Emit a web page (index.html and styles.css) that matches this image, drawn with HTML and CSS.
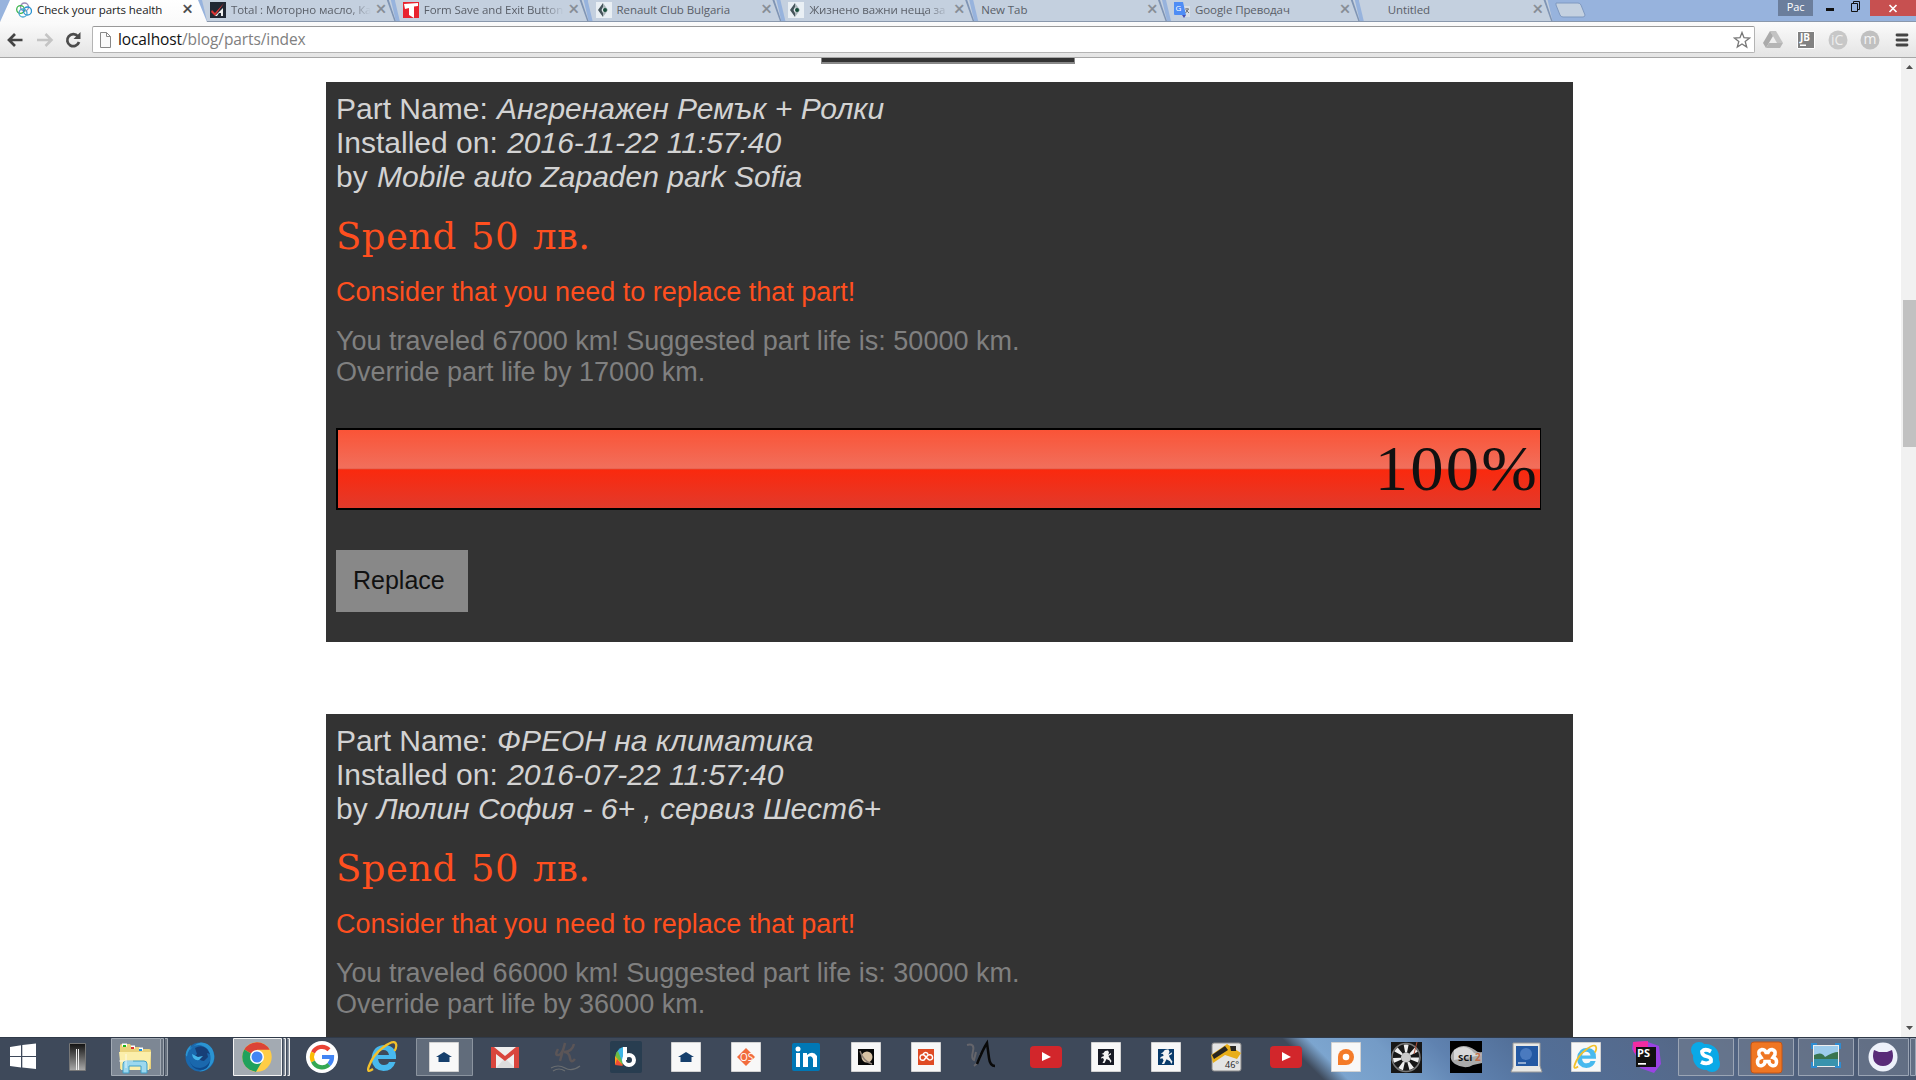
FILE: index.html
```html
<!DOCTYPE html>
<html lang="bg">
<head>
<meta charset="utf-8">
<title>Check your parts health</title>
<link rel="stylesheet" href="styles.css">
</head>
<body>
<header class="tabstrip">
  <div class="tab active"><svg class="fav" viewBox="0 0 16 16" fill="none" stroke-width="1.3"><circle cx="8.500" cy="5" r="4" stroke="#9a8ab8"/><circle cx="4.500" cy="7.500" r="3.800" stroke="#39b54a"/><circle cx="11.500" cy="9" r="4" stroke="#2993d1"/><circle cx="7" cy="11" r="4" stroke="#4aa6d0"/></svg><span class="label">Check your parts health</span><i class="x">×</i></div>
  <div class="tab"><svg class="fav" viewBox="0 0 16 16"><path fill="#202733" d="M0 0h16v16H0z"/><path d="M2 8l3 3 9-10-9 13-4-4z" fill="#d33"/><path d="M5 14l8-8v8h-2v-3H9l-2 3z" fill="#eee"/></svg><span class="label fade">Total : Моторно масло, Ка</span><i class="x">×</i></div>
  <div class="tab"><svg class="fav" viewBox="0 0 16 16"><path fill="#e8232f" d="M0 0h16v16H0z"/><path d="M1 2l14-1v3l-4 .5V16l-5-3V6L2 7z" fill="#fff"/></svg><span class="label fade">Form Save and Exit Button</span><i class="x">×</i></div>
  <div class="tab"><svg class="fav" viewBox="0 0 16 16"><path fill="#e9eff4" d="M0 0h16v16H0z"/><path d="M7 1L2 8l5 7V11L5.500 8 7 5z" fill="#46555b"/><path d="M7 1l5 7-5 7v-4l2-3-2-3z" fill="#a9b4b8"/><circle cx="9" cy="8" r="2" fill="#174d3a"/></svg><span class="label">Renault Club Bulgaria</span><i class="x">×</i></div>
  <div class="tab"><svg class="fav" viewBox="0 0 16 16"><path fill="#e9eff4" d="M0 0h16v16H0z"/><path d="M7 1L2 8l5 7V11L5.500 8 7 5z" fill="#46555b"/><path d="M7 1l5 7-5 7v-4l2-3-2-3z" fill="#a9b4b8"/><circle cx="9" cy="8" r="2" fill="#174d3a"/></svg><span class="label fade">Жизнено важни неща за</span><i class="x">×</i></div>
  <div class="tab nofav"><span class="label">New Tab</span><i class="x">×</i></div>
  <div class="tab"><svg class="fav" viewBox="0 0 16 16"><path d="M7 4h9v11H9z" fill="#d9dee5"/><path d="M0 0h9l3 13H1a1 1 0 01-1-1z" fill="#4f8df5"/><path d="M8 13h4l-2 3z" fill="#4650b5"/><text x="1.500" y="9" font-size="8" fill="#fff">G</text><path d="M11 7h4M13 6v1M14.500 7l-3 4M12 8l3 3" stroke="#777" fill="none"/></svg><span class="label">Google Преводач</span><i class="x">×</i></div>
  <div class="tab blank"><span class="label">Untitled</span><i class="x">×</i></div>
  <svg class="newtab" width="34" height="22" viewBox="0 0 34 22"><path d="M4 3h22q2 0 3 2l4 10q0 2-2 2H11q-2 0-3-2L4 5z" fill="#c4d1e0" stroke="#7f99c0"/></svg>
  <div class="winctl"><span class="lang">Рас</span><svg width="57" height="17" viewBox="0 0 57 17"><path d="M13 8h8v3h-8z" fill="#111"/><path d="M38.500 3.500h6v8h-6zM40.500 3V1.500h6v8H45" fill="none" stroke="#111"/></svg><span class="close"><svg width="10" height="9" viewBox="0 0 10 9"><path d="M1.500 1l7 7M8.500 1l-7 7" stroke="#fff" stroke-width="1.700"/></svg></span></div>
</header>
<nav class="toolbar">
  <svg width="92" height="36" viewBox="0 0 92 36" fill="none"><path d="M22.500 18H10M15 12l-6 6 6 6" stroke="#444" stroke-width="2.700"/><path d="M37 18h13M45.500 12l6 6-6 6" stroke="#c4c4c4" stroke-width="2.500"/><path d="M78 14.500A6 6 0 1 0 79 20" stroke="#4c4c4c" stroke-width="2.700"/><path d="M80.500 10v7h-7z" fill="#4c4c4c"/></svg>
  <div class="omnibox">
    <svg width="14" height="18" viewBox="0 0 14 18"><path d="M1.500 1.500h6l4 4v11h-10zM7.500 1.500v4h4" fill="#fafafa" stroke="#888"/></svg>
    <span class="url">localhost<span>/blog/parts/index</span></span>
    <svg class="star" width="18" height="18" viewBox="0 0 18 18"><path d="M9 1.500l2 5.200 5.600.3-4.400 3.500 1.500 5.500L9 13l-4.700 3 1.500-5.500L1.400 7 7 6.700z" fill="#fff" stroke="#777" stroke-width="1.300"/></svg>
  </div>
  <svg width="161" height="36" viewBox="0 0 161 36"><path d="M15 9h6l7 12h-6z" fill="#c3c3c3"/><path d="M15 9l3 5-7 12-3-5z" fill="#aaa"/><path d="M14 21h14l-3 5H11z" fill="#b5b5b5"/><path d="M42.500 9.500h17v17h-17z" fill="#818181" stroke="#fff"/><text x="45" y="19" font-size="10" font-weight="700" fill="#fff">JB</text><path d="M45 22.500h6V24h-6z" fill="#fff"/><circle cx="83" cy="18" r="9.500" fill="#c7c7c7"/><text x="76" y="23" font-size="14" fill="#eee">iC</text><circle cx="115" cy="18" r="9.500" fill="#c0c0c0"/><text x="108.500" y="22" font-size="14" fill="#f4f4f4">m</text><path d="M142 13h10M142 18h10M142 23h10" stroke="#444" stroke-width="2.800" stroke-linecap="round"/></svg>
</nav>
<div class="viewport">
  <main class="content">
    <div class="strip"></div>
    <section class="card">
      <div class="head"><p>Part Name: <em>Ангренажен Ремък + Ролки</em></p><p>Installed on: <em>2016-11-22 11:57:40</em></p><p>by <em>Mobile auto Zapaden park Sofia</em></p></div>
      <p class="spend">Spend 50 лв.</p>
      <p class="warn">Consider that you need to replace that part!</p>
      <p class="info">You traveled 67000 km! Suggested part life is: 50000 km.<br>Override part life by 17000 km.</p>
      <div class="progress"><span>100%</span></div>
      <button class="replace">Replace</button>
    </section>
    <section class="card">
      <div class="head"><p>Part Name: <em>ФРЕОН на климатика</em></p><p>Installed on: <em>2016-07-22 11:57:40</em></p><p>by <em>Люлин София - 6+ , сервиз Шест6+</em></p></div>
      <p class="spend">Spend 50 лв.</p>
      <p class="warn">Consider that you need to replace that part!</p>
      <p class="info">You traveled 66000 km! Suggested part life is: 30000 km.<br>Override part life by 36000 km.</p>
    </section>
  </main>
  <div class="scroll"><svg width="15" height="16" viewBox="0 0 15 16"><path d="M5 11l3.500-4L12 11z" fill="#505050"/></svg><div class="thumb"></div><svg width="15" height="16" viewBox="0 0 15 16"><path d="M5 5l3.500 4L12 5z" fill="#505050"/></svg></div>
</div>
<footer class="taskbar">
  <svg viewBox="0 0 47 43"><path fill="#fff" d="M10 10l11-1.700V19H10zM22.300 8L36 6.500V19H22.300zM10 20h11v10.500L10 29zM22.300 20H36v12l-13.700-1.500z"/></svg>
  <svg viewBox="0 0 60 43"><defs><linearGradient id="dg" x2="0" y2="1"><stop stop-color="#111"/><stop offset="1" stop-color="#aaa"/></linearGradient></defs><path d="M22.500 6.500h16v27h-16z" fill="url(#dg)" stroke="#777"/><path d="M29.500 12v21M31.500 12v21" stroke="#eee"/></svg>
  <svg viewBox="0 0 63 43"><path d="M4.500 1.500h49v37h-49z" fill="#7d8794" stroke="#a2aab4"/><path d="M54 1.500h2.500v37H54M58 1.500h2.500v37H58" fill="#68727f" stroke="#a2aab4"/><path d="M13 9q0-2 2-2h8l2 3h7l2 2h8q2 0 2 2v18H13z" fill="#e9d27b"/><path d="M12 15h32l-2 18H14z" fill="#fbeeaa"/><path d="M15 8h5M24 10h4M32 12h4" stroke="#fff" stroke-width="3"/><path d="M16 9h3" stroke="#1bb51b" stroke-width="2"/><path d="M24 11h3" stroke="#d33" stroke-width="2"/><path d="M32 13h3" stroke="#1991e6" stroke-width="2"/><path d="M16 36v-9q0-3 3-3h18q3 0 3 3v9h-6v-7H22v7z" fill="#9cd8ef" stroke="#3f9fc8"/><path d="M19 17v14M12 24h14" stroke="#fff" stroke-opacity=".7"/></svg>
  <svg viewBox="0 0 61 43"><circle cx="30" cy="20" r="14.500" fill="#1a68ad"/><path d="M16 16q1-5 5-8l-1 5q4-6 11-7.500 7 0 11 6 4 8 1 14-5 9-14 9 9-3 11-9t-2-13q-6-6-13-4-7 3-8 11-2-1-1-3.500z" fill="#2b94d2"/><path d="M25 11q7-4 12 1l3 5-3-1 1 4-4 4q-4 0-5-3l-5-1 3-3z" fill="#173f78"/><path d="M19 22q2 9 11 9 7-1 10-7-1 9-10 9-9-1-11-11z" fill="#0e4a8c"/><path d="M22 17l6 3 5-1-4 4q-6 1-7-6z" fill="#43b5ea"/></svg>
  <svg viewBox="0 0 61 43"><path d="M2.500 1.500h48v37h-48z" fill="#a3aab2" stroke="#f3f3f3"/><path d="M52.500 1.500h2v37h-2M56.500 1.500h2v37h-2" fill="#8a939f" stroke="#eee"/><circle cx="26" cy="20" r="14.700" fill="#ffcd46"/><path d="M26 20L13.300 12.600A14.700 14.700 0 0 1 38.700 12.700H26z" fill="#db4437"/><path d="M13.300 12.600A14.700 14.700 0 0 0 25 34.700l6.500-11L26 20z" fill="#1fa15d"/><circle cx="26" cy="20" r="7" fill="#fff"/><circle cx="26" cy="20" r="5.500" fill="#4285f4"/></svg>
  <svg viewBox="0 0 61 43"><circle cx="30" cy="20" r="16" fill="#fff"/><g fill="none" stroke-width="4.200"><path d="M37 12.800A10 10 0 0 0 21 15.500" stroke="#ea4335"/><path d="M21 15.500a10 10 0 0 0 0 9" stroke="#fbbc05"/><path d="M21 24.500a10 10 0 0 0 16 3" stroke="#34a853"/><path d="M37 27.500q3-3 3-7.500H30" stroke="#4285f4"/></g></svg>
  <svg viewBox="0 0 61 43"><g id="ie"><path d="M43 22H25q1 6 6 6 4 0 5-3h6.500q-3 9-12 9-11-1-12-12 1-14 13.500-14 12 1 11 14zM25 18h11q-1-5-5.500-5T25 18z" fill="#48b9ee"/><path d="M20 32q-7 5-4-3Q20 18 30 10.500T42.500 6q2 3-1 8" fill="none" stroke="#f3c12b" stroke-width="2.300"/></g></svg>
  <svg viewBox="0 0 60 43"><path d="M2.500 1.500h56v37h-56z" fill="#616c7b" stroke="#8b949f"/><g id="house"><path class="tile" d="M15.500 5.500h29v29h-29z"/><path d="M30 15l8 5h-2.500v5h-11v-5H22z" fill="#163f6c"/></g></svg>
  <svg viewBox="0 0 60 43"><path d="M17 10h28v21H17z" fill="#eee"/><path d="M22 31l9-10 10 10z" fill="#ddd"/><path d="M17 31V10h3l11 9 11-9h3v21h-5V17l-9 7-9-7v14z" fill="#d9453d"/></svg>
  <svg viewBox="0 0 60 43" fill="none" stroke="#5b5557" stroke-width="2.500"><path d="M24 12q-4 7 1 6 4-2 6-12l-5 18M40 7q-2 8-10 8 5 0 6 6t5 1"/><path d="M17 31q7-4 14 0t15-2M19 34q6-4 12 0" stroke-width="1.200" stroke="#696d70"/></svg>
  <svg viewBox="0 0 60 43"><rect x="16" y="4" width="32" height="32" rx="2" fill="#283d50"/><path d="M22 18q1-6 7-8v17z" fill="#3eb5e4"/><path d="M21 23q0-7 3-9l5 13z" fill="#69bd45"/><path d="M21 27v-8l8 9z" fill="#f9a51a"/><path d="M21 28l2-6 6 7z" fill="#ee4c36"/><path d="M31 10v13" stroke="#fff" stroke-width="4"/><circle cx="35" cy="23" r="5" fill="none" stroke="#fff" stroke-width="4"/></svg>
  <svg viewBox="0 0 60 43"><use href="#house" x="2"/></svg>
  <svg viewBox="0 0 60 43"><path class="tile" d="M17.500 5.500h29v29h-29z"/><path d="M32 11l9 9-9 9-9-9z" fill="#f26c3d"/><text x="26" y="24" font-size="10" fill="#fff">OS</text></svg>
  <svg viewBox="0 0 60 43"><rect x="18" y="6" width="28" height="28" rx="2" fill="#0077b5"/><circle cx="24" cy="12" r="2.500" fill="#fff"/><path d="M22 16h4v14h-4zM29 16h4v2q6-5 10 1v11h-4v-8q-1-4-5-2v10h-5z" fill="#fff"/></svg>
  <svg viewBox="0 0 60 43"><path class="tile" d="M17.500 5.500h29v29h-29z"/><path d="M24 12h16v16H24z" fill="#080808"/><circle cx="33" cy="20" r="5.500" fill="#d7c2a4"/><path d="M26 14q3 10 12 13" fill="none" stroke="#8c8078" stroke-width="1.500"/></svg>
  <svg viewBox="0 0 60 43"><path class="tile" d="M17.500 5.500h29v29h-29z"/><path d="M24 12h16v16H24z" fill="#df4b24"/><path d="M35 23l-5-5q-4-1-4 2.500t4 2.500l4-5q4-1 4.500 2t-3.500 3M29 17q3-3 5 0" fill="none" stroke="#fff" stroke-width="1.500"/></svg>
  <svg viewBox="0 0 60 43" fill="none"><path d="M13 8q8-2 6 6t1 9l2-8M20 29q6-4 6-12" stroke="#65656b" stroke-width="2"/><path d="M22 27Q28 12 32 6l2 15q1 8 6 8" stroke="#090909" stroke-width="2.500" transform="translate(1)"/></svg>
  <svg viewBox="0 0 60 43"><g id="yt"><rect x="16" y="9" width="32" height="22" rx="4" fill="#d2262b"/><path d="M28 15l9 5-9 4z" fill="#fff"/></g></svg>
  <svg viewBox="0 0 60 43"><path class="tile" d="M17.500 5.500h29v29h-29z"/><path d="M24 12h16v16H24z" fill="#171a24"/><g id="lion"><path d="M31 14l3-.5 1 2-1 2.500 3-2v1.500L34.500 19l1 2 2 3-1 2-1-2.500-3-1.500-2 4h-2l1.500-3-1-2-2 .5.500-1.500 2.500-1-.5-1.500-2-.5 2-1z" fill="#f4f4f4"/></g></svg>
  <svg viewBox="0 0 60 43"><path class="tile" d="M17.500 5.500h29v29h-29z"/><path d="M24 12h16v16H24z" fill="#093b6b"/><g transform="translate(-5.800 -3.600) scale(1.180)"><use href="#lion"/></g></svg>
  <svg viewBox="0 0 60 43"><rect x="18" y="6" width="29" height="28" rx="2" fill="#e4e4e4" stroke="#888"/><path d="M17 18L33 7l14 9-4 6-12-4-12 8z" fill="#e8ae1a"/><path d="M18 18l13-9 3 4-14 9zM36 9h6v5h-5z" fill="#282622"/><text x="31" y="31" font-size="9" fill="#222">46°</text></svg>
  <svg viewBox="0 0 60 43"><use href="#yt"/></svg>
  <svg viewBox="0 0 60 43"><path class="tile" d="M17.500 5.500h29v29h-29z"/><path d="M24 28V20a8 8 0 1 1 8 8z" fill="#f47b29"/><circle cx="32" cy="20" r="3.300" fill="#fff"/></svg>
  <svg viewBox="0 0 60 43"><path d="M17 5h31v31H17z" fill="#171717"/><circle cx="32" cy="20.500" r="14" fill="none" stroke="#777" stroke-width="1.500"/><circle cx="32" cy="20.500" r="9" fill="none" stroke="#eee" stroke-width="8" stroke-dasharray="3.500 4.600"/><circle cx="32" cy="20.500" r="5" fill="#c9c9c9"/><path d="M43 5l-3 12" stroke="#b45138"/></svg>
  <svg viewBox="0 0 60 43"><path d="M16 4h32v32H16z"/><path d="M48 15q-4 1-7-2-12-8-21 0-7 8 1 14 10 6 18 1l9-2z" fill="#aaa"/><path d="M20 13q12-7 20 3l8 2-28 5z" fill="#d8d8d8"/><text x="24" y="24" font-size="9.500" font-weight="700" fill="#111">SCI</text><text x="41" y="24" font-size="10" font-weight="700" fill="#c46d48">2</text></svg>
  <svg viewBox="0 0 60 43"><path d="M19 6h27v23l2 6H17l2-5z" fill="#e8e8e5" stroke="#999"/><path d="M22 9h22v20H22z" fill="#2459a3"/><circle cx="32" cy="17" r="6" fill="#4a7abf"/><path d="M24 26h8" stroke="#fff"/></svg>
  <svg viewBox="0 0 60 43"><path class="tile" d="M17.500 5.500h29v29h-29z"/><g transform="translate(8.500 4.500) scale(.78)"><use href="#ie"/></g></svg>
  <svg viewBox="0 0 60 43"><path d="M19 5l12-1 14 5 2 18-7 9-14-5-4-12-4-7z" fill="#9a43e3"/><path d="M19 5l15-1v8L20 16z" fill="#f22ca0"/><path d="M22 10h20v20H22z" fill="#111"/><text x="23" y="20" font-size="11" font-weight="700" fill="#fff">PS</text><path d="M24 26h8v1.700h-8z" fill="#fff"/></svg>
  <svg viewBox="0 0 60 43"><path class="frame" d="M4.500 1.500h55v37h-55z"/><circle cx="32" cy="20" r="13" fill="#0aa9e7"/><circle cx="25" cy="13" r="8" fill="#0aa9e7"/><circle cx="38" cy="27" r="8" fill="#0aa9e7"/><path d="M37 14.500q-6-3.500-9 0 0 4 5 5t4 5q-4 3.500-10 .5" fill="none" stroke="#fff" stroke-width="3.800"/></svg>
  <svg viewBox="0 0 60 43"><path class="frame" d="M4.500 1.500h55v37h-55z"/><rect x="17" y="5" width="31" height="31" rx="3" fill="#ef7623" stroke="#c35416"/><path d="M28 12.500q3 0 4 3h2q1-3 4-3 4 1 3 5l-2 3q4 1 3.500 5t-4.500 3q-3-1-3-4h-4q0 3-3 4-4 1-4.500-3t3.500-5l-2-3q-1-4 3-5z" fill="none" stroke="#fff" stroke-width="3.500"/></svg>
  <svg viewBox="0 0 60 43"><path class="frame" d="M4.500 1.500h55v37h-55z"/><path d="M19 8h26v22H19z" fill="#eee"/><path d="M20 9h24v20H20z" fill="#9dccec"/><path d="M20 18q8-4 11 2 8-5 13-5v9H20z" fill="#397450"/><path d="M20 22h24v7H20z" fill="#3993ad"/><path d="M18 12V7h5M41 7h5v5M46 25v5h-5M23 30h-5v-5" fill="none" stroke="#2f8cd1" stroke-width="2"/></svg>
  <svg viewBox="0 0 62 43"><path class="frame" d="M4.500 1.500h50v37h-50zM56.500 1.500h5v37h-5z"/><circle cx="29" cy="20" r="14.500" fill="#edf1fa"/><path d="M20 13l5 2h8l5-2q2 6 0 11-3 5-9 5t-9-5q-2-5 0-11z" fill="#592b78"/></svg>
</footer>
</body>
</html>
```
FILE: styles.css
```css
* { box-sizing: border-box; }
body { margin: 0; width: 1916px; height: 1080px; overflow: hidden; display: flex; flex-direction: column; background: #fff; font-family: "Liberation Sans", sans-serif; }
p { margin: 0; }
svg { display: block; flex: none; }
svg text { font-family: "Open Sans", sans-serif; }

.tabstrip { height: 22px; flex: none; display: flex; background: #97b3dd; border-bottom: 1px solid #8a98ac; font: 11.5px/19px "Open Sans", sans-serif; letter-spacing: -.09px; }
.tab { width: 192.8px; flex: none; height: 21px; padding-left: 16px; display: flex; align-items: flex-start; color: #5a5f68; position: relative; }
.tab:first-child { width: 194px; }
.tab::before { content: ""; position: absolute; inset: 0 -9px 0 8px; background: #c4d0df; clip-path: polygon(0 0, calc(100% - 5px) 0, 100% 100%, 5px 100%); }
.tab::after { content: ""; position: absolute; right: -9px; top: 0; width: 11px; height: 21px; background: #7f94b4; clip-path: polygon(2px 0, 4px 0, 11px 21px, 9.5px 21px); }
.tab.active { color: #222; }
.tab.active::before { inset: 0 -13px -1px 0; background: linear-gradient(#fff, #fafafa); clip-path: polygon(10px 0, calc(100% - 9px) 0, 100% 100%, 0 100%); z-index: 1; }
.tab > * { position: relative; z-index: 2; }
.fav { width: 16px; height: 16px; margin: 2px 5px 0 0; }
.label { width: 144px; flex: none; height: 19px; overflow: hidden; white-space: nowrap; }
.fade { mask-image: linear-gradient(90deg, #000 118px, transparent 140px); }
.nofav .label { width: 165px; }
.blank .label { margin-left: 21px; }
.x { font: 18px/19px "Liberation Sans", sans-serif; width: 16px; text-align: center; color: #858b93; -webkit-text-stroke: .4px; }
.active .x { color: #444; }
.newtab { margin-left: 8px; }
.winctl { display: flex; margin-left: auto; height: 17px; }
.lang { width: 35px; height: 16px; background: #6b7e9c; color: #fff; font-size: 11px; line-height: 14px; text-align: center; }
.close { width: 46px; height: 16px; background: #c75050; display: flex; align-items: center; justify-content: center; }

.toolbar { height: 36px; flex: none; display: flex; align-items: flex-start; background: linear-gradient(#fbfbfb, #e4e4e4); border-bottom: 1px solid #a6a6a6; }
.omnibox { flex: 1; height: 27px; margin-top: 4px; background: #fff; border: 1px solid #b4b4b4; border-top-color: #999; border-radius: 2px; display: flex; align-items: center; padding: 0 3px 0 6px; }
.url { margin: -2px 0 0 5px; font: 15.5px/20px "Open Sans", sans-serif; letter-spacing: -.1px; color: #111; }
.url span { color: #808080; }
.star { margin-left: auto; }

.viewport { flex: 1; min-height: 0; display: flex; overflow: hidden; }
.content { flex: 1; display: flex; flex-direction: column; align-items: center; overflow: hidden; padding-right: 2px; }
.strip { width: 254px; height: 6px; flex: none; margin: 0 0 18px -3px; background: #333; border: solid #888; border-width: 0 1px 2px 1px; }
.card { width: 1247px; flex: none; height: 560px; margin-bottom: 72px; padding: 10px; background: #333; color: #d3d3d3; }
.head { font-size: 30px; line-height: 34px; white-space: nowrap; }
.head em { margin-left: 1px; }
.spend { margin-top: 20px; font: 37px/46px "DejaVu Serif", serif; letter-spacing: .45px; word-spacing: 2px; color: #ff4f1f; }
.warn { margin-top: 16px; font-size: 27px; line-height: 32px; color: #ff4f1f; }
.info { margin-top: 18px; font-size: 27px; line-height: 31px; color: #808080; }
.progress { width: 1205px; height: 82px; margin-top: 40px; border: 2px solid #000; border-right-width: 1px; background: linear-gradient(#fa5437, #f16f5c 49%, #db5340 50%, #fa290e 51%, #e23a2b); text-align: right; color: #111; font: 63px/79px "Liberation Serif", serif; letter-spacing: 2px; }
.progress span { display: inline-block; margin-right: 1px; transform: scaleX(1.06); transform-origin: right; }
.replace { display: block; width: 132px; height: 62px; margin-top: 40px; padding: 0 0 1px 17px; border: 0; background: #888; color: #111; text-align: left; font: 25px "Liberation Sans", sans-serif; }
.scroll { width: 15px; background: #f1f1f1; display: flex; flex-direction: column; }
.thumb { height: 147px; margin: 226px 0 auto 2px; background: #c1c1c1; }

.taskbar { height: 43px; flex: none; display: grid; grid-template-columns: 47px 60px 63px repeat(4, 61px) repeat(24, 60px) 62px; border-top: 1px solid #303a49; background: linear-gradient(45deg, #3e495a 936px, #7ca5cf 954px, #749bc6 1000px, #5f82b0 1040px, #526f98 1100px, #55698a 1200px, #46536a); }
.taskbar > svg { width: 100%; height: 43px; margin-top: -1px; }
.tile { fill: #f8f8f8; stroke: #d2d2d2; }
.frame { fill: #707c91; fill-opacity: .65; stroke: #9ba5b5; }
```
